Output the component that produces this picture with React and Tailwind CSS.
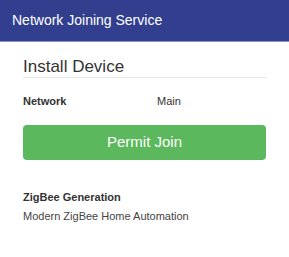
import React from "react";

const App = () => {
  return (
    <div className="w-[289px] h-[257px] bg-white font-['Liberation_Sans',Arial,sans-serif] overflow-hidden">
      <div className="h-[42px] bg-[#323f8f] border-b border-[#8a93c9] flex items-center px-3">
        <span className="text-white text-[14px]">Network Joining Service</span>
      </div>
      <div className="px-[23px] pt-[15px]">
        <h1 className="text-[17px] text-[#333] leading-[20px] border-b border-[#e5e5e5]">
          Install Device
        </h1>
        <div className="flex items-center mt-[15px] text-[11px] text-[#333]">
          <span className="font-bold w-[134px]">Network</span>
          <span>Main</span>
        </div>
        <button className="mt-[15px] w-full h-[35px] rounded-[4px] bg-[#5cb85c] text-white text-[15px]">
          Permit Join
        </button>
        <div className="mt-[29px] text-[11px] font-bold text-[#333]">
          ZigBee Generation
        </div>
        <div className="mt-[3px] text-[11px] text-[#444]">
          Modern ZigBee Home Automation
        </div>
      </div>
    </div>
  );
};

export default App;
